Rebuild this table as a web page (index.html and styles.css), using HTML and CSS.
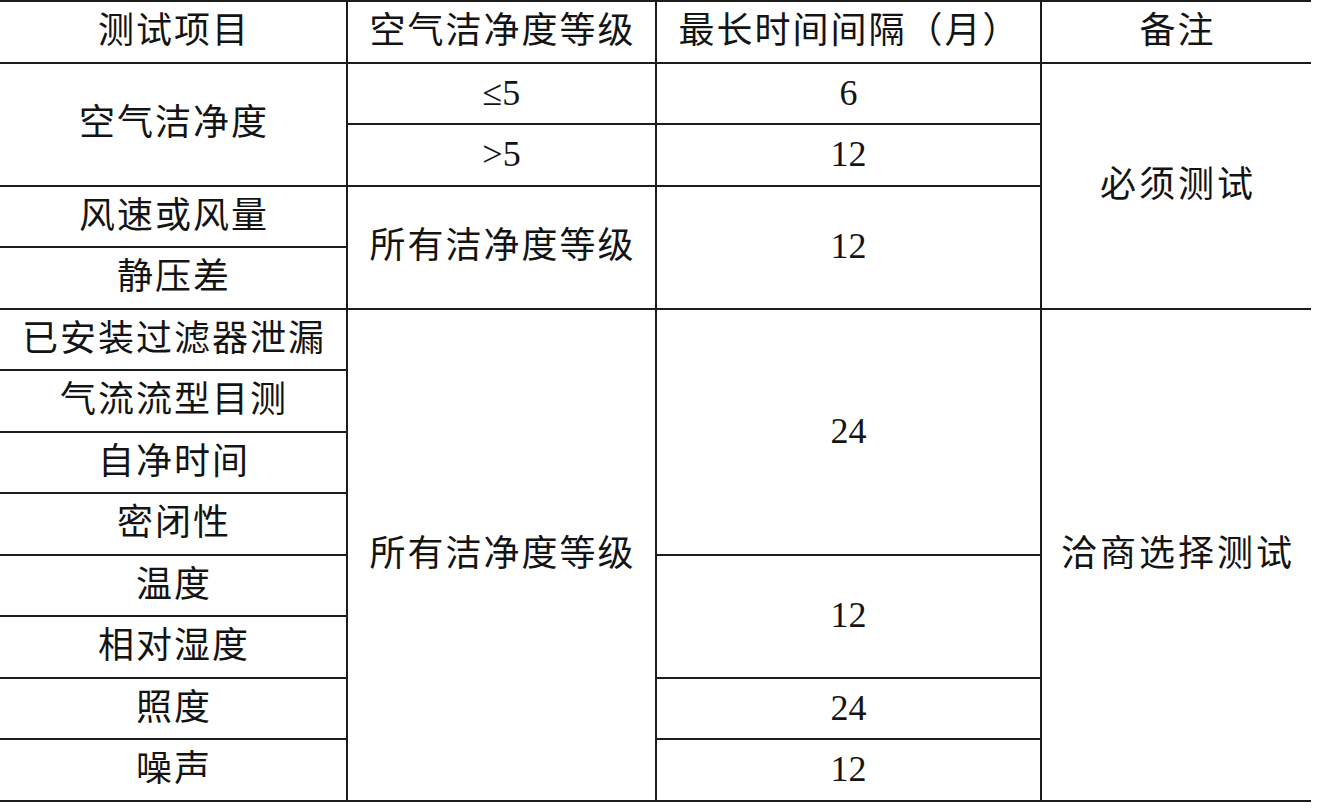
FILE: index.html
```html
<!DOCTYPE html>
<html lang="zh-CN">
<head>
<meta charset="utf-8">
<title>测试项目</title>
<link rel="stylesheet" href="styles.css">
</head>
<body>
<table class="spec">
  <colgroup>
    <col class="c1"><col class="c2"><col class="c3"><col class="c4">
  </colgroup>
  <tr>
    <td>测试项目</td><td>空气洁净度等级</td><td>最长时间间隔（月）</td><td>备注</td>
  </tr>
  <tr>
    <td rowspan="2">空气洁净度</td><td class="num">≤5</td><td class="num">6</td><td rowspan="4" class="note">必须测试</td>
  </tr>
  <tr>
    <td class="num">&gt;5</td><td class="num">12</td>
  </tr>
  <tr>
    <td>风速或风量</td><td rowspan="2">所有洁净度等级</td><td rowspan="2" class="num">12</td>
  </tr>
  <tr>
    <td>静压差</td>
  </tr>
  <tr>
    <td>已安装过滤器泄漏</td><td rowspan="8">所有洁净度等级</td><td rowspan="4" class="num">24</td><td rowspan="8" class="note">洽商选择测试</td>
  </tr>
  <tr><td>气流流型目测</td></tr>
  <tr><td>自净时间</td></tr>
  <tr><td>密闭性</td></tr>
  <tr>
    <td>温度</td><td rowspan="2" class="num">12</td>
  </tr>
  <tr><td>相对湿度</td></tr>
  <tr>
    <td>照度</td><td class="num">24</td>
  </tr>
  <tr>
    <td>噪声</td><td class="num">12</td>
  </tr>
</table>
</body>
</html>
```

FILE: styles.css
```css
html, body {
  margin: 0;
  padding: 0;
  background: #ffffff;
}
.spec {
  border-collapse: collapse;
  table-layout: fixed;
  width: 1311px;
  font-family: "Liberation Serif", "Noto Sans CJK SC", serif;
  font-size: 36px;
  color: #141414;
}
.c1 { width: 347px; }
.c2 { width: 309px; }
.c3 { width: 385px; }
.c4 { width: 270px; }
.spec tr {
  height: 61.5px;
}
.spec td {
  border: 2px solid #1c1c1c;
  padding: 0 0 0 2px;
  text-align: center;
  vertical-align: middle;
  line-height: 1.2;
  white-space: nowrap;
  letter-spacing: 2px;
}
.spec tr td:first-child {
  border-left: none;
}
.spec td:last-child {
  border-right: none;
}
.spec td.note {
  border-right: none;
  letter-spacing: 3px;
  padding-left: 3px;
}
.spec td.num {
  letter-spacing: 0;
  padding-left: 0;
}
```
